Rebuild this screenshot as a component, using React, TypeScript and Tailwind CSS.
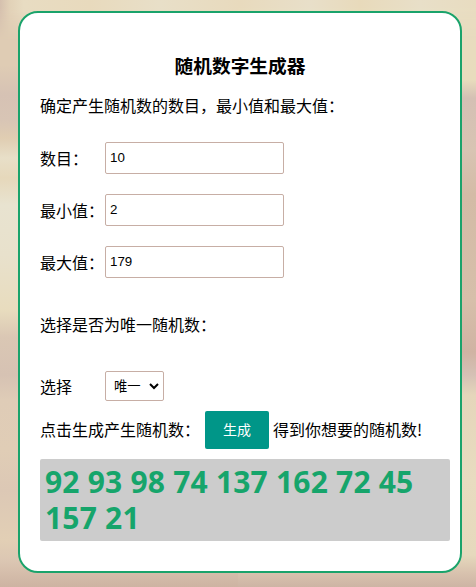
import { useState } from "react";

const fields = [
  { id: "count", label: "数目：", value: "10" },
  { id: "min", label: "最小值：", value: "2" },
  { id: "max", label: "最大值：", value: "179" },
];

const initialNumbers = [92, 93, 98, 74, 137, 162, 72, 45, 157, 21];

function generate(count: number, min: number, max: number, unique: boolean) {
  const total = unique ? Math.min(count, max - min + 1) : count;
  const result: number[] = [];
  while (result.length < total) {
    const n = Math.floor(Math.random() * (max - min + 1)) + min;
    if (!unique || !result.includes(n)) result.push(n);
  }
  return result;
}

export default function App() {
  const [values, setValues] = useState(fields.map((f) => f.value));
  const [mode, setMode] = useState("unique");
  const [numbers, setNumbers] = useState(initialNumbers);

  const handleGenerate = () => {
    const [count, min, max] = values.map(Number);
    setNumbers(generate(count, min, max, mode === "unique"));
  };

  return (
    <div className="relative h-[587px] w-[476px] overflow-hidden bg-[#e8dcc1] pt-[11px] pl-[18px] font-['Noto_Sans_CJK_SC',sans-serif] text-base text-black">
      {/* Blurred backdrop */}
      <div className="absolute inset-0 flex">
        <div className="flex-1 bg-[linear-gradient(to_bottom,#dfccb4_0px,#dfccb4_65px,#d6c2b4_95px,#d8c5b5_120px,#e0cdb2_138px,#e8dfc8_158px,#e6d8bb_178px,#e8e3d0_205px,#e8e1cc_255px,#e8dcbe_310px,#dac7b4_337px,#d6c2b3_375px,#dfccb7_400px,#e0cdb6_450px,#dcc8b5_490px,#e2cfb5_540px,#dcc7b3_560px,#cdb3a2_587px)]" />
        <div className="flex-1 bg-[linear-gradient(to_bottom,#e8dcc0_0px,#e8dcbd_80px,#d4c0b4_98px,#d8c4b3_150px,#d3bba6_195px,#d6bfaa_300px,#d0b3a3_352px,#d5c1b5_375px,#e5d6bb_395px,#e8dcc0_480px,#e6d9bd_555px,#d8c2ae_573px,#cdb4a4_587px)]" />
      </div>
      <div className="absolute inset-x-0 top-0 h-10 bg-[linear-gradient(to_right,#d5c0ae_0px,#e2d2b8_10px,#e8dcc2_24px,#e8dabd_90px,#e8dfc8_160px,#e8dabd_240px,#e8dfc9_310px,#e8dabb_360px,#e8dfc8_420px,#e8dcc0_476px)] mask-b-from-20%" />

      <div className="relative h-[562px] w-[444px] rounded-[20px] border-2 border-[#1aa36b] bg-white pt-[39px] pl-5">
        <h3 className="w-[400px] text-center text-[18.72px] leading-[26px] font-bold">随机数字生成器</h3>
        <p className="mt-[15px] leading-6">确定产生随机数的数目，最小值和最大值：</p>

        <div className="mt-[25px] flex flex-col gap-5">
          {fields.map((field, i) => (
            <div key={field.id} className="flex h-8 items-center">
              <label htmlFor={field.id} className="w-[65px] whitespace-nowrap">
                {field.label}
              </label>
              <input
                id={field.id}
                value={values[i]}
                onChange={(e) => setValues(values.map((v, j) => (j === i ? e.target.value : v)))}
                className="h-8 w-[179px] rounded-xs border border-[#c7aea5] bg-white pb-0.5 pl-1 font-['Liberation_Sans',sans-serif] text-[13.33px] outline-none"
              />
            </div>
          ))}
        </div>

        <p className="mt-[34px] leading-6">选择是否为唯一随机数：</p>

        <div className="mt-[35px] flex h-[30px] items-center">
          <label htmlFor="mode" className="w-[65px]">选择</label>
          <div className="relative">
            <select
              id="mode"
              value={mode}
              onChange={(e) => setMode(e.target.value)}
              className="block h-[30px] w-[59px] appearance-none rounded-xs border border-[#c7aea5] bg-white pl-2 text-[13.33px] leading-7 outline-none"
            >
              <option value="unique">唯一</option>
              <option value="repeat">不唯一</option>
            </select>
            <svg
              className="pointer-events-none absolute top-[12px] right-[5px] h-[7px] w-[10px]"
              viewBox="0 0 10 7"
              fill="none"
              stroke="black"
              strokeWidth="2"
            >
              <path d="M1 1l4 4 4-4" />
            </svg>
          </div>
        </div>

        <div className="mt-2.5 flex h-[38px] items-center whitespace-nowrap">
          <span className="w-[165px] pb-[3px]">点击生成产生随机数：</span>
          <button
            onClick={handleGenerate}
            className="h-[38px] w-16 rounded-xs bg-[#009688] pb-px text-sm leading-[37px] text-white"
          >
            生成
          </button>
          <span className="ml-1 pb-[3px]">得到你想要的随机数!</span>
        </div>

        <div className="mt-2.5 h-[82px] w-[410px] rounded-xs bg-[#cccccc] px-[5px] pt-[5px] font-['Noto_Sans','Noto_Sans_CJK_SC',sans-serif] text-[30px] leading-9 font-bold tracking-[0.2px] text-[#16a56b]">
          {numbers.join(" ")}
        </div>
      </div>
    </div>
  );
}
